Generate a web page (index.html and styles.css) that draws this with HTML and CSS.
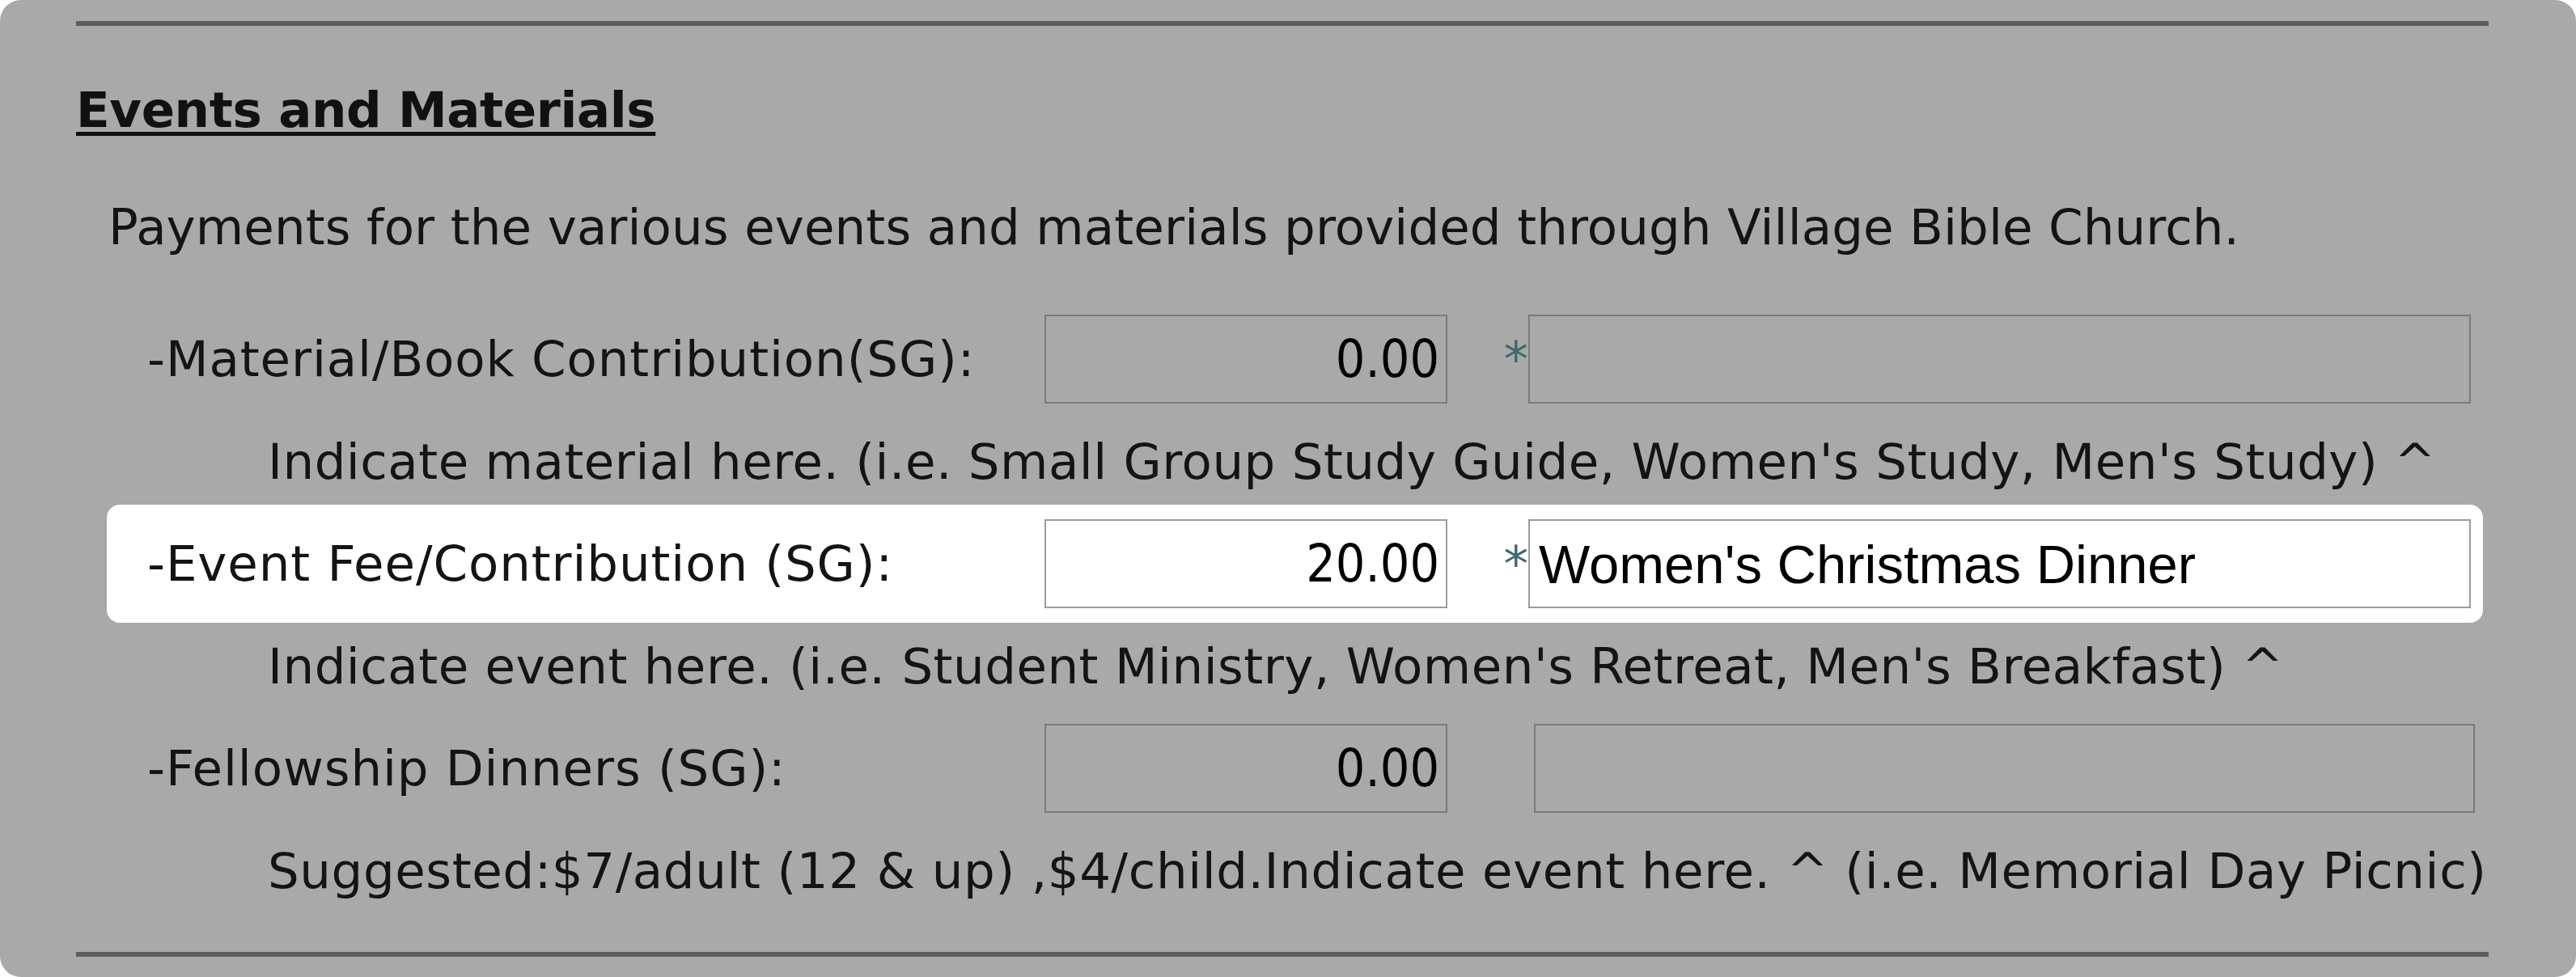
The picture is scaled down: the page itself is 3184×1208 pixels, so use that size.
FILE: index.html
```html
<!DOCTYPE html>
<html lang="en">
<head>
<meta charset="utf-8">
<title>Events and Materials</title>
<link rel="stylesheet" href="styles.css">
</head>
<body>
<div class="panel">
  <div class="rule"></div>
  <h2 class="title">Events and Materials</h2>
  <p class="intro">Payments for the various events and materials provided through Village Bible Church.</p>

  <div class="field">
    <div class="row">
      <span class="label">-Material/Book Contribution(SG):</span>
      <span class="box amount">0.00</span>
      <span class="req">*</span>
      <span class="box desc"></span>
    </div>
    <div class="help">Indicate material here. (i.e. Small Group Study Guide, Women's Study, Men's Study) ^</div>
  </div>

  <div class="field">
    <div class="row row-active">
      <span class="label">-Event Fee/Contribution (SG):</span>
      <span class="box amount">20.00</span>
      <span class="req">*</span>
      <span class="box desc">Women's Christmas Dinner</span>
    </div>
    <div class="help">Indicate event here. (i.e. Student Ministry, Women's Retreat, Men's Breakfast) ^</div>
  </div>

  <div class="field">
    <div class="row">
      <span class="label">-Fellowship Dinners (SG):</span>
      <span class="box amount">0.00</span>
      <span class="req req-none"></span>
      <span class="box desc desc-wide"></span>
    </div>
    <div class="help help-long">Suggested:$7/adult (12 &amp; up) ,$4/child.Indicate event here. ^ (i.e. Memorial Day Picnic)</div>
  </div>

  <div class="rule rule-bottom"></div>
</div>
</body>
</html>
```

FILE: styles.css
```css
html, body {
  margin: 0;
  padding: 0;
  background: #ffffff;
}

body {
  font-family: "DejaVu Sans", Verdana, sans-serif;
  color: #141414;
}

.panel {
  width: 3184px;
  height: 1208px;
  box-sizing: border-box;
  padding: 26px 108px 0 94px;
  background: #aaa9aa;
  border-radius: 26px;
  overflow: hidden;
}

.rule {
  height: 6px;
  background: #5e5d5e;
}

.rule-bottom {
  margin-top: 47px;
}

.title {
  margin: 68px 0 0 0;
  font-size: 61px;
  line-height: 72px;
  font-weight: bold;
  letter-spacing: -0.4px;
  color: #111;
  text-decoration: underline;
  text-decoration-thickness: 5px;
  text-underline-offset: 6px;
}

.intro {
  margin: 73px 0 54px 40px;
  font-size: 61px;
  line-height: 72px;
  letter-spacing: 0.1px;
}

.field {
  display: flex;
  flex-direction: column;
}

.row {
  display: flex;
  align-items: center;
  height: 146px;
  margin-left: 38px;
  width: 2937px;
  box-sizing: border-box;
  padding-left: 50px;
  border-radius: 16px;
}

.row-active {
  background: #ffffff;
}

.label {
  width: 1109px;
  flex: none;
  font-size: 61px;
  line-height: 72px;
  letter-spacing: 0.9px;
  white-space: nowrap;
}

.box {
  flex: none;
  height: 110px;
  box-sizing: border-box;
  border: 2px solid #7b7a7b;
  display: flex;
  align-items: center;
  color: #000;
}

.row-active .box {
  border-color: #9c9c9c;
  background: #ffffff;
}

.amount {
  width: 498px;
  justify-content: flex-end;
  padding-right: 8px;
  font-family: "DejaVu Sans Condensed", "DejaVu Sans", sans-serif;
  font-stretch: condensed;
  font-size: 64px;
}

.req {
  flex: none;
  width: 100px;
  text-align: right;
  font-size: 61px;
  line-height: 72px;
  color: #3d6a70;
}

.req-none {
  width: 107px;
}

.desc {
  width: 1165px;
  padding-left: 11px;
  font-family: "Liberation Sans", Arial, sans-serif;
  font-size: 67px;
}

.desc-wide {
  width: 1163px;
}

.help {
  height: 107px;
  line-height: 107px;
  margin-left: 237px;
  font-size: 61px;
  letter-spacing: 0.5px;
  white-space: nowrap;
}

.help-long {
  letter-spacing: 0.6px;
}
```
